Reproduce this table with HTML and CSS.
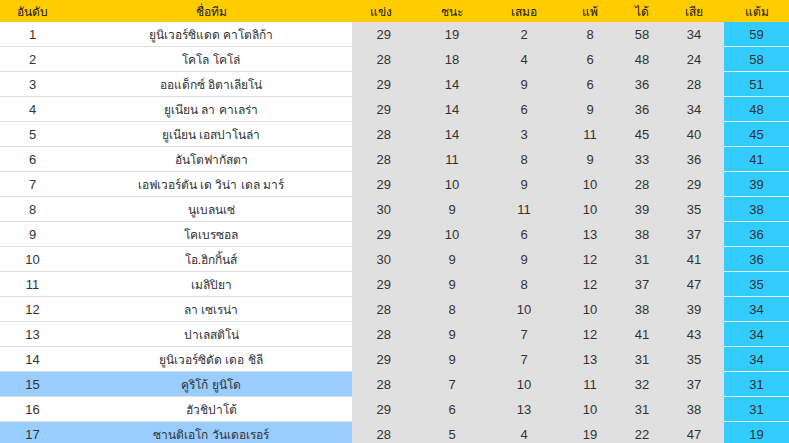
FILE: index.html
```html
<!DOCTYPE html>
<html lang="th">
<head>
<meta charset="utf-8">
<link rel="stylesheet" href="styles.css">
</head>
<body>
<table class="standings">
  <colgroup>
    <col class="c-rank"><col class="c-team"><col class="c-p"><col class="c-w"><col class="c-d"><col class="c-l"><col class="c-f"><col class="c-a"><col class="c-pts">
  </colgroup>
  <thead>
    <tr><th>อันดับ</th><th class="team">ชื่อทีม</th><th class="right">แข่ง</th><th>ชนะ</th><th>เสมอ</th><th>แพ้</th><th>ได้</th><th>เสีย</th><th>แต้ม</th></tr>
  </thead>
  <tbody>
    <tr><td>1</td><td class="team">ยูนิเวอร์ซิแดด คาโตลิก้า</td><td class="n right">29</td><td class="n">19</td><td class="n">2</td><td class="n">8</td><td class="n">58</td><td class="n">34</td><td class="pts">59</td></tr>
    <tr><td>2</td><td class="team">โคโล โคโล่</td><td class="n right">28</td><td class="n">18</td><td class="n">4</td><td class="n">6</td><td class="n">48</td><td class="n">24</td><td class="pts">58</td></tr>
    <tr><td>3</td><td class="team">ออแด็กซ์ อิตาเลียโน่</td><td class="n right">29</td><td class="n">14</td><td class="n">9</td><td class="n">6</td><td class="n">36</td><td class="n">28</td><td class="pts">51</td></tr>
    <tr><td>4</td><td class="team">ยูเนียน ลา คาเลร่า</td><td class="n right">29</td><td class="n">14</td><td class="n">6</td><td class="n">9</td><td class="n">36</td><td class="n">34</td><td class="pts">48</td></tr>
    <tr><td>5</td><td class="team">ยูเนียน เอสปาโนล่า</td><td class="n right">28</td><td class="n">14</td><td class="n">3</td><td class="n">11</td><td class="n">45</td><td class="n">40</td><td class="pts">45</td></tr>
    <tr><td>6</td><td class="team">อันโตฟากัสตา</td><td class="n right">28</td><td class="n">11</td><td class="n">8</td><td class="n">9</td><td class="n">33</td><td class="n">36</td><td class="pts">41</td></tr>
    <tr><td>7</td><td class="team">เอฟเวอร์ตัน เด วิน่า เดล มาร์</td><td class="n right">29</td><td class="n">10</td><td class="n">9</td><td class="n">10</td><td class="n">28</td><td class="n">29</td><td class="pts">39</td></tr>
    <tr><td>8</td><td class="team">นูเบลนเซ่</td><td class="n right">30</td><td class="n">9</td><td class="n">11</td><td class="n">10</td><td class="n">39</td><td class="n">35</td><td class="pts">38</td></tr>
    <tr><td>9</td><td class="team">โคเบรซอล</td><td class="n right">29</td><td class="n">10</td><td class="n">6</td><td class="n">13</td><td class="n">38</td><td class="n">37</td><td class="pts">36</td></tr>
    <tr><td>10</td><td class="team">โอ.ฮิกกิ้นส์</td><td class="n right">30</td><td class="n">9</td><td class="n">9</td><td class="n">12</td><td class="n">31</td><td class="n">41</td><td class="pts">36</td></tr>
    <tr><td>11</td><td class="team">เมลิปิยา</td><td class="n right">29</td><td class="n">9</td><td class="n">8</td><td class="n">12</td><td class="n">37</td><td class="n">47</td><td class="pts">35</td></tr>
    <tr><td>12</td><td class="team">ลา เซเรน่า</td><td class="n right">28</td><td class="n">8</td><td class="n">10</td><td class="n">10</td><td class="n">38</td><td class="n">39</td><td class="pts">34</td></tr>
    <tr><td>13</td><td class="team">ปาเลสติโน่</td><td class="n right">28</td><td class="n">9</td><td class="n">7</td><td class="n">12</td><td class="n">41</td><td class="n">43</td><td class="pts">34</td></tr>
    <tr><td>14</td><td class="team">ยูนิเวอร์ซิดัด เดอ ชิลี</td><td class="n right">29</td><td class="n">9</td><td class="n">7</td><td class="n">13</td><td class="n">31</td><td class="n">35</td><td class="pts">34</td></tr>
    <tr class="hl"><td>15</td><td class="team">คูริโก้ ยูนิโด</td><td class="n right">28</td><td class="n">7</td><td class="n">10</td><td class="n">11</td><td class="n">32</td><td class="n">37</td><td class="pts">31</td></tr>
    <tr><td>16</td><td class="team">ฮัวชิปาโต้</td><td class="n right">29</td><td class="n">6</td><td class="n">13</td><td class="n">10</td><td class="n">31</td><td class="n">38</td><td class="pts">31</td></tr>
    <tr class="hl"><td>17</td><td class="team">ซานติเอโก วันเดอเรอร์</td><td class="n right">28</td><td class="n">5</td><td class="n">4</td><td class="n">19</td><td class="n">22</td><td class="n">47</td><td class="pts">19</td></tr>
  </tbody>
</table>
</body>
</html>
```

FILE: styles.css
```css
html, body {
  margin: 0;
  padding: 0;
  background: #ffffff;
}
body {
  font-family: Tahoma, "Liberation Sans", Arial, sans-serif;
  font-size: 13px;
  color: #333333;
  width: 789px;
  height: 443px;
  overflow: hidden;
}
.standings {
  border-collapse: collapse;
  table-layout: fixed;
  width: 789px;
}
.c-rank { width: 65px; }
.c-team { width: 287px; }
.c-p { width: 64px; }
.c-w { width: 72px; }
.c-d { width: 72px; }
.c-l { width: 60px; }
.c-f { width: 44px; }
.c-a { width: 60px; }
.c-pts { width: 65px; }

.standings th {
  background: #ffcc00;
  height: 22px;
  padding: 0;
  font-size: 12px;
  font-weight: normal;
  color: #1a1a1a;
  text-align: center;
  vertical-align: middle;
  white-space: nowrap;
}
.standings td {
  height: 24px;
  padding: 0;
  text-align: center;
  vertical-align: middle;
  border-bottom: 1px solid #dddddd;
  white-space: nowrap;
}
.standings th.right { text-align: right; padding-right: 24px; }
.standings td.right { text-align: right; padding-right: 25px; }
.standings .team { padding-left: 5px; }
.standings td.team { font-size: 12px; }
.standings td.n {
  background: #e0e0e0;
  border-bottom-color: #e0e0e0;
}
.standings td.pts {
  background: #33ccff;
  border-bottom-color: #d9f3ff;
}
.standings tr.hl td:nth-child(1),
.standings tr.hl td:nth-child(2) {
  background: #99ccff;
  border-bottom-color: #dddddd;
}
```
